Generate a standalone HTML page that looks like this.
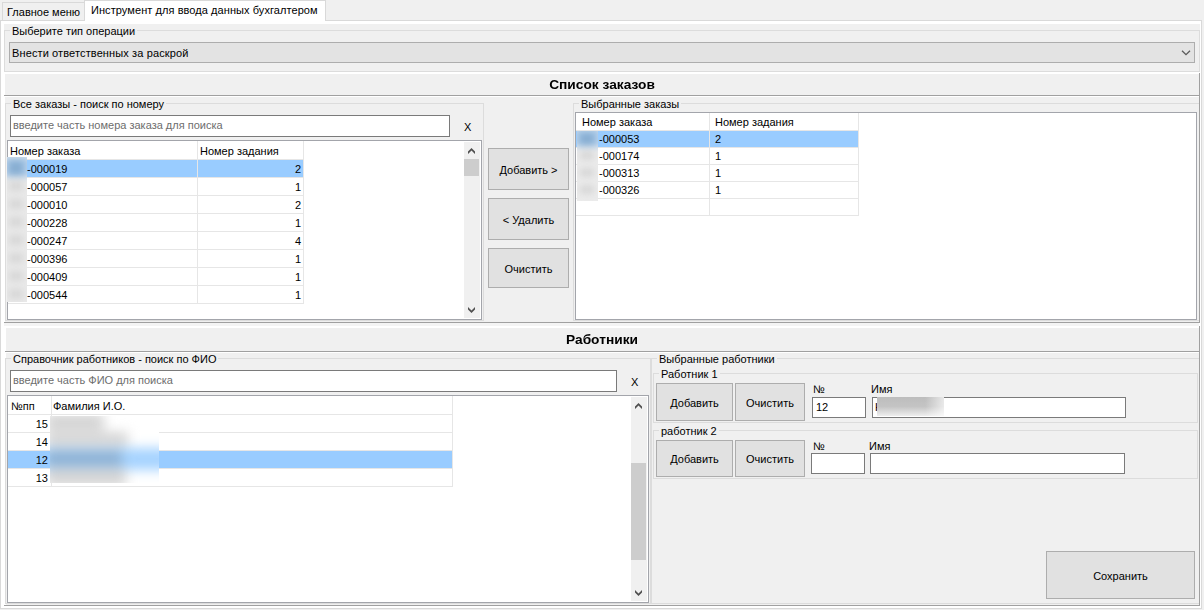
<!DOCTYPE html><html><head><meta charset="utf-8"><style>
html,body{margin:0;padding:0;}
body{width:1204px;height:610px;overflow:hidden;position:relative;background:#F0F0F0;font-family:"Liberation Sans",sans-serif;}
.a{position:absolute;}
.t{position:absolute;font-size:11px;line-height:13px;white-space:nowrap;color:#000;}
.b{position:absolute;font-size:12px;font-weight:bold;transform:scaleX(1.145);transform-origin:50% 50%;line-height:13px;white-space:nowrap;color:#000;}
.bw{position:absolute;overflow:hidden;}
.bl{position:absolute;left:0;top:0;right:0;bottom:0;}
.bl div{position:absolute;}
</style></head><body>
<div class="a" style="left:0px;top:20px;width:1202px;height:589px;box-sizing:border-box;border:1px solid #D9D9D9;background:#fff;"></div>
<div class="a" style="left:2px;top:2px;width:83px;height:18px;box-sizing:border-box;border:1px solid #D9D9D9;background:#F0F0F0;border-bottom:none;"></div>
<div class="t" style="left:7px;top:6px;">Главное меню</div>
<div class="a" style="left:84px;top:0px;width:242px;height:21px;box-sizing:border-box;border:1px solid #D9D9D9;background:#fff;border-bottom:none;"></div>
<div class="t" style="left:91px;top:4px;letter-spacing:0.07px">Инструмент для ввода данных бухгалтером</div>
<div class="a" style="left:4px;top:24px;width:1196px;height:48px;background:#F0F0F0;"></div>
<div class="a" style="left:4px;top:30px;width:1196px;height:42px;box-sizing:border-box;border:1px solid #DCDCDC;"></div>
<div class="t" style="left:10px;top:25px;padding:0 2px 0 2px;background:#F0F0F0">Выберите тип операции</div>
<div class="a" style="left:9px;top:42px;width:1186px;height:21px;box-sizing:border-box;border:1px solid #ADADAD;background:#E3E3E3;"></div>
<div class="t" style="left:12px;top:47px;letter-spacing:0.12px">Внести ответственных за раскрой</div>
<svg class="a" style="left:1180px;top:49px" width="12" height="8"><polyline points="2,1.8 6,5.6 10,1.8" fill="none" stroke="#5a5a5a" stroke-width="1.3"/></svg>
<div class="a" style="left:5px;top:74px;width:1194px;height:248px;background:#F0F0F0;"></div>
<div class="a" style="left:4px;top:322px;width:1196px;height:1px;background:#A0A0A0;"></div>
<div class="a" style="left:1199px;top:73px;width:1px;height:250px;background:#A0A0A0;"></div>
<div class="a" style="left:4px;top:95px;width:1195px;height:1px;background:#A0A0A0;"></div>
<div class="a" style="left:5px;top:96px;width:1194px;height:1px;background:#fff;"></div>
<div class="b" style="left:4px;width:1196px;text-align:center;top:79px;">Список заказов</div>
<div class="a" style="left:5px;top:103px;width:479px;height:218px;box-sizing:border-box;border:1px solid #DCDCDC;"></div>
<div class="t" style="left:11px;top:98px;padding:0 2px 0 2px;background:#F0F0F0">Все заказы - поиск по номеру</div>
<div class="a" style="left:10px;top:115px;width:440px;height:22px;box-sizing:border-box;border:1px solid #7A7A7A;background:#fff;"></div>
<div class="t" style="left:13px;top:119px;color:#6D6D6D">введите часть номера заказа для поиска</div>
<div class="t" style="left:464px;top:121px;">X</div>
<div class="a" style="left:7px;top:140px;width:475px;height:180px;box-sizing:border-box;border:1px solid #A3A5AB;background:#fff;"></div>
<div class="t" style="left:10px;top:145px;">Номер заказа</div>
<div class="t" style="left:200px;top:145px;">Номер задания</div>
<div class="a" style="left:197px;top:141px;width:1px;height:163px;background:#E6E6E6;"></div>
<div class="a" style="left:303px;top:141px;width:1px;height:163px;background:#E6E6E6;"></div>
<div class="a" style="left:8px;top:159px;width:296px;height:1px;background:#E6E6E6;"></div>
<div class="a" style="left:8px;top:160px;width:189px;height:17px;background:#99CCFF;"></div>
<div class="a" style="left:198px;top:160px;width:105px;height:17px;background:#99CCFF;"></div>
<div class="a" style="left:8px;top:177px;width:296px;height:1px;background:#E6E6E6;"></div>
<div class="t" style="left:27px;top:163px;">-000019</div>
<div class="t" style="right:903px;top:163px;">2</div>
<div class="a" style="left:8px;top:195px;width:296px;height:1px;background:#E6E6E6;"></div>
<div class="t" style="left:27px;top:181px;">-000057</div>
<div class="t" style="right:903px;top:181px;">1</div>
<div class="a" style="left:8px;top:213px;width:296px;height:1px;background:#E6E6E6;"></div>
<div class="t" style="left:27px;top:199px;">-000010</div>
<div class="t" style="right:903px;top:199px;">2</div>
<div class="a" style="left:8px;top:231px;width:296px;height:1px;background:#E6E6E6;"></div>
<div class="t" style="left:27px;top:217px;">-000228</div>
<div class="t" style="right:903px;top:217px;">1</div>
<div class="a" style="left:8px;top:249px;width:296px;height:1px;background:#E6E6E6;"></div>
<div class="t" style="left:27px;top:235px;">-000247</div>
<div class="t" style="right:903px;top:235px;">4</div>
<div class="a" style="left:8px;top:267px;width:296px;height:1px;background:#E6E6E6;"></div>
<div class="t" style="left:27px;top:253px;">-000396</div>
<div class="t" style="right:903px;top:253px;">1</div>
<div class="a" style="left:8px;top:285px;width:296px;height:1px;background:#E6E6E6;"></div>
<div class="t" style="left:27px;top:271px;">-000409</div>
<div class="t" style="right:903px;top:271px;">1</div>
<div class="a" style="left:8px;top:303px;width:296px;height:1px;background:#E6E6E6;"></div>
<div class="t" style="left:27px;top:289px;">-000544</div>
<div class="t" style="right:903px;top:289px;">1</div>
<div class="bw" style="left:7px;top:157px;width:20px;height:145px;background:#e9e9e9"><div class="bl" style="filter:blur(3px)"><div style="left:-3px;top:0;width:26px;height:20px;background:#a9c9e8"></div><div style="left:2px;top:4px;width:14px;height:14px;background:#88aed2"></div><div style="left:2px;top:24px;width:14px;height:10px;background:#d8d8d8"></div><div style="left:2px;top:42px;width:14px;height:10px;background:#d8d8d8"></div><div style="left:2px;top:60px;width:14px;height:10px;background:#d8d8d8"></div><div style="left:2px;top:78px;width:14px;height:10px;background:#d8d8d8"></div><div style="left:2px;top:96px;width:14px;height:10px;background:#d8d8d8"></div><div style="left:2px;top:114px;width:14px;height:10px;background:#d8d8d8"></div><div style="left:2px;top:132px;width:14px;height:10px;background:#d8d8d8"></div></div></div>
<div class="a" style="left:464px;top:142px;width:16px;height:176px;background:#F0F0F0;"></div>
<svg class="a" style="left:467.0px;top:147px" width="9.0" height="7.9"><polygon points="1.00,4.50 4.50,1.00 8.00,4.50 8.00,6.90 4.50,3.40 1.00,6.90" fill="#505050"/></svg>
<div class="a" style="left:464px;top:159px;width:15px;height:17px;background:#CDCDCD;"></div>
<svg class="a" style="left:467.0px;top:306px" width="9.0" height="7.9"><polygon points="1.00,1.00 4.50,4.50 8.00,1.00 8.00,3.40 4.50,6.90 1.00,3.40" fill="#505050"/></svg>
<div class="a" style="left:488px;top:148px;width:81px;height:42px;box-sizing:border-box;border:1px solid #ADADAD;background:#E1E1E1;"></div>
<div class="t" style="left:488px;width:81px;text-align:center;top:164px;">Добавить &gt;</div>
<div class="a" style="left:488px;top:198px;width:81px;height:42px;box-sizing:border-box;border:1px solid #ADADAD;background:#E1E1E1;"></div>
<div class="t" style="left:488px;width:81px;text-align:center;top:214px;">&lt; Удалить</div>
<div class="a" style="left:488px;top:248px;width:81px;height:40px;box-sizing:border-box;border:1px solid #ADADAD;background:#E1E1E1;"></div>
<div class="t" style="left:488px;width:81px;text-align:center;top:263px;">Очистить</div>
<div class="a" style="left:573px;top:103px;width:626px;height:218px;box-sizing:border-box;border:1px solid #DCDCDC;border-right:none;"></div>
<div class="t" style="left:579px;top:98px;padding:0 2px 0 2px;background:#F0F0F0">Выбранные заказы</div>
<div class="a" style="left:575px;top:112px;width:622px;height:208px;box-sizing:border-box;border:1px solid #A3A5AB;background:#fff;"></div>
<div class="t" style="left:582px;top:116px;">Номер заказа</div>
<div class="t" style="left:715px;top:116px;">Номер задания</div>
<div class="a" style="left:709px;top:113px;width:1px;height:102px;background:#E6E6E6;"></div>
<div class="a" style="left:858px;top:113px;width:1px;height:103px;background:#E6E6E6;"></div>
<div class="a" style="left:576px;top:130px;width:283px;height:1px;background:#E6E6E6;"></div>
<div class="a" style="left:576px;top:131px;width:133px;height:16px;background:#99CCFF;"></div>
<div class="a" style="left:710px;top:131px;width:148px;height:16px;background:#99CCFF;"></div>
<div class="a" style="left:576px;top:147px;width:283px;height:1px;background:#E6E6E6;"></div>
<div class="t" style="left:599px;top:133px;">-000053</div>
<div class="t" style="left:715px;top:133px;">2</div>
<div class="a" style="left:576px;top:164px;width:283px;height:1px;background:#E6E6E6;"></div>
<div class="t" style="left:599px;top:150px;">-000174</div>
<div class="t" style="left:715px;top:150px;">1</div>
<div class="a" style="left:576px;top:181px;width:283px;height:1px;background:#E6E6E6;"></div>
<div class="t" style="left:599px;top:167px;">-000313</div>
<div class="t" style="left:715px;top:167px;">1</div>
<div class="a" style="left:576px;top:198px;width:283px;height:1px;background:#E6E6E6;"></div>
<div class="t" style="left:599px;top:184px;">-000326</div>
<div class="t" style="left:715px;top:184px;">1</div>
<div class="a" style="left:576px;top:215px;width:283px;height:1px;background:#E6E6E6;"></div>
<div class="bw" style="left:577px;top:131px;width:21px;height:70px;background:#ebebeb"><div class="bl" style="filter:blur(3px)"><div style="left:-3px;top:-3px;width:27px;height:19px;background:#a9c9e8"></div><div style="left:3px;top:2px;width:14px;height:12px;background:#88aed2"></div><div style="left:3px;top:20px;width:14px;height:9px;background:#d8d8d8"></div><div style="left:3px;top:37px;width:14px;height:9px;background:#d8d8d8"></div><div style="left:3px;top:54px;width:14px;height:9px;background:#d8d8d8"></div></div></div>
<div class="a" style="left:4px;top:323px;width:1195px;height:1px;background:#F4F4F4;"></div>
<div class="a" style="left:4px;top:324px;width:1195px;height:1px;background:#F4F4F4;"></div>
<div class="a" style="left:4px;top:325px;width:1195px;height:1px;background:#F4F4F4;"></div>
<div class="a" style="left:6px;top:328px;width:1193px;height:277px;background:#F0F0F0;"></div>
<div class="a" style="left:4px;top:605px;width:1196px;height:1px;background:#A0A0A0;"></div>
<div class="a" style="left:1199px;top:326px;width:1px;height:280px;background:#A0A0A0;"></div>
<div class="a" style="left:5px;top:351px;width:1194px;height:1px;background:#A0A0A0;"></div>
<div class="a" style="left:6px;top:352px;width:1193px;height:1px;background:#fff;"></div>
<div class="b" style="left:4px;width:1196px;text-align:center;top:334px;">Работники</div>
<div class="a" style="left:5px;top:358px;width:646px;height:246px;box-sizing:border-box;border:1px solid #DCDCDC;"></div>
<div class="t" style="left:11px;top:353px;padding:0 2px 0 2px;background:#F0F0F0">Справочник работников - поиск по ФИО</div>
<div class="a" style="left:10px;top:370px;width:607px;height:22px;box-sizing:border-box;border:1px solid #7A7A7A;background:#fff;"></div>
<div class="t" style="left:13px;top:374px;color:#6D6D6D">введите часть ФИО для поиска</div>
<div class="t" style="left:631px;top:376px;">X</div>
<div class="a" style="left:7px;top:395px;width:642px;height:208px;box-sizing:border-box;border:1px solid #A3A5AB;background:#fff;"></div>
<div class="t" style="left:11px;top:400px;">№пп</div>
<div class="t" style="left:53px;top:400px;">Фамилия И.О.</div>
<div class="a" style="left:51px;top:396px;width:1px;height:91px;background:#E6E6E6;"></div>
<div class="a" style="left:452px;top:396px;width:1px;height:91px;background:#E6E6E6;"></div>
<div class="a" style="left:8px;top:414px;width:445px;height:1px;background:#E6E6E6;"></div>
<div class="a" style="left:8px;top:432px;width:445px;height:1px;background:#E6E6E6;"></div>
<div class="t" style="right:1156px;top:418px;">15</div>
<div class="a" style="left:8px;top:450px;width:445px;height:1px;background:#E6E6E6;"></div>
<div class="t" style="right:1156px;top:436px;">14</div>
<div class="a" style="left:8px;top:451px;width:43px;height:17px;background:#99CCFF;"></div>
<div class="a" style="left:52px;top:451px;width:400px;height:17px;background:#99CCFF;"></div>
<div class="a" style="left:8px;top:468px;width:445px;height:1px;background:#E6E6E6;"></div>
<div class="t" style="right:1156px;top:454px;">12</div>
<div class="a" style="left:8px;top:486px;width:445px;height:1px;background:#E6E6E6;"></div>
<div class="t" style="right:1156px;top:472px;">13</div>
<div class="bw" style="left:50px;top:416px;width:109px;height:67px;background:#fff"><div class="bl" style="filter:blur(6px)"><div style="left:-10px;top:32px;width:130px;height:22px;background:#a6d3ff"></div><div style="left:-4px;top:-2px;width:58px;height:16px;background:#d3d3d3"></div><div style="left:-4px;top:16px;width:82px;height:14px;background:#d5d5d5"></div><div style="left:-4px;top:34px;width:76px;height:16px;background:#8db2d5"></div><div style="left:-4px;top:52px;width:80px;height:18px;background:#d5d5d5"></div></div></div>
<div class="a" style="left:631px;top:397px;width:16px;height:204px;background:#F0F0F0;"></div>
<svg class="a" style="left:634.0px;top:402px" width="9.0" height="7.9"><polygon points="1.00,4.50 4.50,1.00 8.00,4.50 8.00,6.90 4.50,3.40 1.00,6.90" fill="#505050"/></svg>
<div class="a" style="left:631px;top:463px;width:15px;height:97px;background:#CDCDCD;"></div>
<svg class="a" style="left:634.0px;top:589px" width="9.0" height="7.9"><polygon points="1.00,1.00 4.50,4.50 8.00,1.00 8.00,3.40 4.50,6.90 1.00,3.40" fill="#505050"/></svg>
<div class="a" style="left:651px;top:358px;width:548px;height:246px;box-sizing:border-box;border:1px solid #DCDCDC;border-right:none;"></div>
<div class="t" style="left:657px;top:353px;padding:0 2px 0 2px;background:#F0F0F0">Выбранные работники</div>
<div class="a" style="left:653px;top:373px;width:545px;height:50px;box-sizing:border-box;border:1px solid #DCDCDC;"></div>
<div class="t" style="left:659px;top:368px;padding:0 2px 0 2px;background:#F0F0F0">Работник 1</div>
<div class="a" style="left:656px;top:383px;width:77px;height:38px;box-sizing:border-box;border:1px solid #ADADAD;background:#E1E1E1;"></div>
<div class="t" style="left:656px;width:77px;text-align:center;top:397px;">Добавить</div>
<div class="a" style="left:735px;top:383px;width:70px;height:38px;box-sizing:border-box;border:1px solid #ADADAD;background:#E1E1E1;"></div>
<div class="t" style="left:735px;width:70px;text-align:center;top:397px;">Очистить</div>
<div class="t" style="left:813px;top:383px;">№</div>
<div class="t" style="left:871px;top:383px;">Имя</div>
<div class="a" style="left:812px;top:397px;width:54px;height:21px;box-sizing:border-box;border:1px solid #7A7A7A;background:#fff;"></div>
<div class="t" style="left:816px;top:401px;">12</div>
<div class="a" style="left:872px;top:397px;width:254px;height:21px;box-sizing:border-box;border:1px solid #7A7A7A;background:#fff;"></div>
<div class="t" style="left:875px;top:401px;">Н</div>
<div class="bw" style="left:877px;top:397px;width:67px;height:19px;background:linear-gradient(to right, rgba(255,255,255,0) 0%, rgba(255,255,255,0) 72%, rgba(255,255,255,0.65) 100%), linear-gradient(to bottom, #bdbdbd 0%, #c4c4c4 50%, #eeeeee 100%)"></div>
<div class="a" style="left:653px;top:430px;width:545px;height:49px;box-sizing:border-box;border:1px solid #DCDCDC;"></div>
<div class="t" style="left:659px;top:425px;padding:0 2px 0 2px;background:#F0F0F0">работник 2</div>
<div class="a" style="left:656px;top:440px;width:77px;height:37px;box-sizing:border-box;border:1px solid #ADADAD;background:#E1E1E1;"></div>
<div class="t" style="left:656px;width:77px;text-align:center;top:453px;">Добавить</div>
<div class="a" style="left:735px;top:440px;width:70px;height:37px;box-sizing:border-box;border:1px solid #ADADAD;background:#E1E1E1;"></div>
<div class="t" style="left:735px;width:70px;text-align:center;top:453px;">Очистить</div>
<div class="t" style="left:813px;top:440px;">№</div>
<div class="t" style="left:869px;top:440px;">Имя</div>
<div class="a" style="left:811px;top:453px;width:54px;height:21px;box-sizing:border-box;border:1px solid #7A7A7A;background:#fff;"></div>
<div class="a" style="left:870px;top:453px;width:255px;height:21px;box-sizing:border-box;border:1px solid #7A7A7A;background:#fff;"></div>
<div class="a" style="left:1046px;top:551px;width:149px;height:48px;box-sizing:border-box;border:1px solid #ADADAD;background:#E1E1E1;"></div>
<div class="t" style="left:1046px;width:149px;text-align:center;top:570px;">Сохранить</div>
</body></html>
